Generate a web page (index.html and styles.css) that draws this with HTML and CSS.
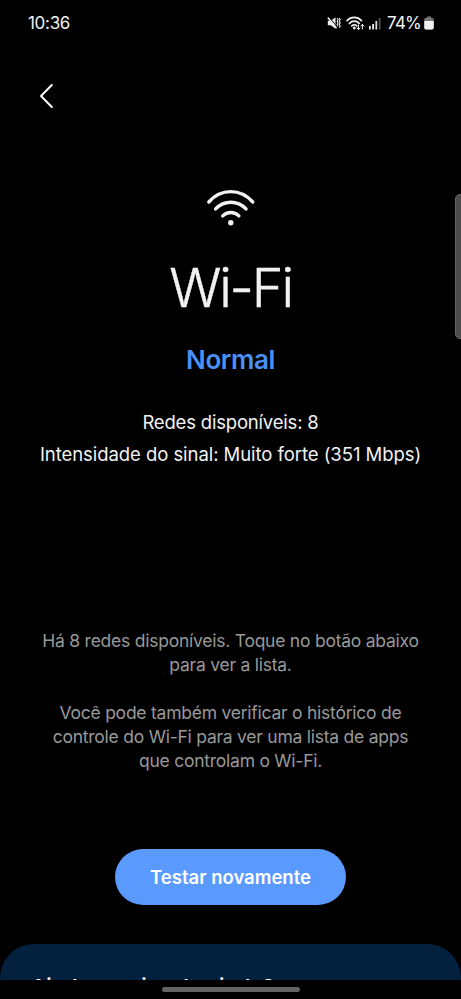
FILE: index.html
```html
<!DOCTYPE html>
<html lang="pt-BR">
<head>
<meta charset="utf-8">
<meta name="viewport" content="width=device-width, initial-scale=1">
<title>Wi-Fi</title>
<link rel="stylesheet" href="styles.css">
</head>
<body>
<div class="screen">
  <header class="status">
    <span class="clock">10:36</span>
    <div class="indicators">
      <svg class="mute" width="14" height="14" viewBox="0 0 14 14" fill="none" stroke="#eee">
        <path d="M.8 4.800h3L8.500 1.200v11.600L3.800 9.300h-3z" fill="#eee" stroke="none"/>
        <path d="M2 1l8 9.800" stroke="#000" stroke-width="1"/>
        <path d="M.8 1.500l8.800 10.800" stroke-width="1.400"/>
        <path d="M10.200 2l.9 1.500-.9 1.700.9 1.700-.9 1.700.9 1.700M12.300 2l.9 1.500-.9 1.700.9 1.700-.9 1.700.9 1.700-.9 1.500" stroke-width="1.100"/>
      </svg>
      <svg class="net" width="19" height="15" viewBox="0 0 19 15" fill="none" stroke="#eee" stroke-width="1.700" stroke-linecap="round">
        <path d="M1 4.600C5 .4 11.500.4 15.500 4.600M3.400 7.300c2.800-2.900 7-2.900 9.800 0M5.800 9.800c1.500-1.500 3.500-1.500 5 0"/>
        <circle cx="8.300" cy="12" r=".6" fill="#eee"/>
        <path d="M12.500 9v4.500M11 12l1.500 1.600L14 12M16.400 13V8.500M14.900 10l1.500-1.600L17.900 10" stroke-width="1"/>
      </svg>
      <svg class="bars" width="12" height="13" viewBox="0 0 12 13">
        <path d="M0 9h1.800v3.500H0zM3.200 7H5v5.500H3.200z" fill="#eee"/>
        <path d="M6.400 4h1.800v8.500H6.400z" fill="#ddd"/>
        <path d="M9.800 1h1.700v11.500H9.800z" fill="#555"/>
      </svg>
      <span class="percent">74%</span>
      <svg class="battery" width="10" height="14" viewBox="0 0 10 14">
        <path d="M3 .5h4v2H3z" fill="#777"/>
        <rect x=".3" y="1.800" width="9.400" height="11.700" rx="1.800" fill="#777"/>
        <path d="M.3 5h9.400v6.700q0 1.800-1.800 1.800H2.100Q.3 13.500.3 11.700z" fill="#f0f0f0"/>
      </svg>
    </div>
  </header>

  <nav class="toolbar">
    <svg width="16" height="26" viewBox="0 0 16 26" fill="none" stroke="#fff" stroke-width="2" stroke-linecap="round" stroke-linejoin="round">
      <path d="M12.800 2L2 13l10.800 11"/>
    </svg>
  </nav>

  <main class="content">
    <svg class="wifi" width="50" height="38" viewBox="0 0 50 38" fill="none" stroke="#f2f2f2" stroke-width="3.400" stroke-linecap="round">
      <path d="M2.800 13C15-.8 34.500-.8 46.800 13M9.600 19.900c8.500-8.900 21.900-8.900 30.400 0M16.700 26.900c4.400-4.500 11.800-4.500 16.200 0"/>
      <circle cx="24.800" cy="33.800" r="2.700" fill="#f2f2f2" stroke="none"/>
    </svg>
    <h1 class="title"><span>Wi-Fi</span></h1>
    <p class="state"><span>Normal</span></p>
    <div class="facts">
      <p class="networks"><span>Redes disponíveis: 8</span></p>
      <p class="signal"><span>Intensidade do sinal: Muito forte (351 Mbps)</span></p>
    </div>
    <div class="notes">
      <p><span>Há 8 redes disponíveis. Toque no botão abaixo</span><br><span>para ver a lista.</span></p>
      <p><span>Você pode também verificar o histórico de</span><br><span>controle do Wi-Fi para ver uma lista de apps</span><br><span>que controlam o Wi-Fi.</span></p>
    </div>
    <button class="retry" type="button"><span>Testar novamente</span></button>
  </main>

  <section class="help"><h2><span>Ainda precisa de ajuda?</span></h2></section>
  <footer class="gesture"><div class="handle"></div></footer>
  <div class="edge-panel"></div>
</div>
</body>
</html>
```
FILE: styles.css
```css
* { box-sizing: border-box; }
body { margin: 0; background: #000; }
.screen {
  position: relative;
  display: flex;
  flex-direction: column;
  width: 461px;
  height: 999px;
  overflow: hidden;
  background: #000;
  color: #f2f2f2;
  font-family: Inter, "Liberation Sans", sans-serif;
}
h1, h2, p { margin: 0; white-space: nowrap; font-weight: 400; }
svg { display: block; flex: none; }

.status {
  display: flex;
  justify-content: space-between;
  align-items: center;
  height: 46px;
  padding: 0 27px 0 28px;
}
.clock { font-size: 17px; letter-spacing: -0.3px; }
.indicators { display: flex; align-items: center; }
.net { margin-left: 5px; }
.bars { margin-left: 4px; }
.percent { margin-left: 6px; font-size: 17px; letter-spacing: -0.8px; }
.battery { margin-left: 3px; }

.toolbar { display: flex; align-items: center; height: 100px; padding-left: 39px; }

.content { display: flex; flex-direction: column; align-items: center; }
.wifi { margin-top: 43px; }
.title { margin-top: 28px; font-size: 54px; line-height: 66px; font-weight: 300; letter-spacing: -2.200px; -webkit-text-stroke: 0.4px #f2f2f2; }
.state { margin-top: 21px; font-size: 26px; line-height: 36px; font-weight: 600; color: #4a91f7; letter-spacing: -0.400px; }
.facts { margin-top: 28px; font-size: 18.500px; line-height: 32px; text-align: center; }
.networks { letter-spacing: -0.190px; }
.signal { letter-spacing: -0.060px; }
.notes { margin-top: 159px; font-size: 17.500px; line-height: 24px; text-align: center; color: #999; letter-spacing: -0.240px; }
.notes p + p { margin-top: 24px; }
.retry {
  width: 231px;
  height: 56px;
  margin-top: 76px;
  padding: 0;
  border: 0;
  border-radius: 28px;
  background: #5a9aff;
  color: #fff;
  font: 600 18.500px/56px Inter, "Liberation Sans", sans-serif;
}

.help {
  height: 36px;
  margin-top: auto;
  padding: 28px 31px 0;
  overflow: hidden;
  border-radius: 34px 34px 0 0;
  background: #03213f;
}
.help h2 { font-size: 20.500px; line-height: 30px; font-weight: 600; color: #fff; letter-spacing: 0.300px; }
.gesture { display: flex; justify-content: center; align-items: center; flex: none; height: 19px; }
.handle { width: 138px; height: 5px; border-radius: 3px; background: #636363; }
.edge-panel {
  position: absolute;
  top: 194px;
  right: -4px;
  width: 10px;
  height: 145px;
  border: 1px solid #666;
  border-radius: 5px;
  background: #4b4b4b;
}
```
